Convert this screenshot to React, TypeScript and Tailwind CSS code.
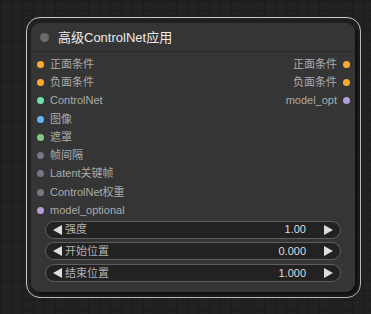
import React from 'react';

const font = { fontFamily: '"Liberation Sans", "Noto Sans CJK SC", sans-serif' };

type Slot = { label: string; color: string };

const inputs: Slot[] = [
  { label: '正面条件', color: 'bg-[#ffa931]' },
  { label: '负面条件', color: 'bg-[#ffa931]' },
  { label: 'ControlNet', color: 'bg-[#6ee0a8]' },
  { label: '图像', color: 'bg-[#64b5f6]' },
  { label: '遮罩', color: 'bg-[#81c784]' },
  { label: '帧间隔', color: 'bg-[#777785]' },
  { label: 'Latent关键帧', color: 'bg-[#777785]' },
  { label: 'ControlNet权重', color: 'bg-[#777785]' },
  { label: 'model_optional', color: 'bg-[#b39ddb]' },
];

const outputs: Slot[] = [
  { label: '正面条件', color: 'bg-[#ffa931]' },
  { label: '负面条件', color: 'bg-[#ffa931]' },
  { label: 'model_opt', color: 'bg-[#b39ddb]' },
];

const widgets = [
  { label: '强度', value: '1.00' },
  { label: '开始位置', value: '0.000' },
  { label: '结束位置', value: '1.000' },
];

function Arrow({ dir }: { dir: 'left' | 'right' }) {
  return (
    <svg width="9" height="10" viewBox="0 0 9 10" className="shrink-0">
      {dir === 'left' ? (
        <polygon points="9,0 9,10 0,5" fill="#dddddd" />
      ) : (
        <polygon points="0,0 0,10 9,5" fill="#dddddd" />
      )}
    </svg>
  );
}

export default function App() {
  return (
    <div
      className="relative w-[371px] h-[314px] overflow-hidden bg-[#222222] bg-[linear-gradient(#1c1c1c_1px,transparent_1px),linear-gradient(90deg,#1c1c1c_1px,transparent_1px)] bg-[size:11px_10px]"
      style={font}
    >
      {/* selected node */}
      <div className="absolute left-[26px] top-[17px] w-[335px] rounded-[14px] border border-[#c4c4c4] pt-[5px] pb-[5px] pl-[4px] pr-[5px]">
        <div className="rounded-[9px] bg-[#353535] shadow-[3px_3px_4px_rgba(0,0,0,0.6)]">
          {/* title */}
          <div className="flex items-center h-[29px] border-b border-[#2b2b2b] pl-[9px]">
            <span className="w-[9px] h-[9px] rounded-full bg-[#6b6b6b]" />
            <span className="ml-[9px] text-[13px] text-[#ececec] leading-none">高级ControlNet应用</span>
          </div>

          {/* slots */}
          <div className="flex justify-between pt-[3px]">
            <div className="flex flex-col">
              {inputs.map((s) => (
                <div key={s.label} className="flex items-center h-[18.3px] pl-[6px]">
                  <span className={`w-[7px] h-[7px] rounded-full ${s.color}`} />
                  <span className="ml-[6px] text-[11px] text-[#ababab] leading-none">{s.label}</span>
                </div>
              ))}
            </div>
            <div className="flex flex-col items-end">
              {outputs.map((s) => (
                <div key={s.label} className="flex items-center h-[18.3px] pr-[5px]">
                  <span className="mr-[6px] text-[11px] text-[#ababab] leading-none">{s.label}</span>
                  <span className={`w-[7px] h-[7px] rounded-full ${s.color}`} />
                </div>
              ))}
            </div>
          </div>

          {/* widgets */}
          <div className="flex flex-col gap-[3.7px] px-[14px] pt-[1px] pb-[10px]">
            {widgets.map((w) => (
              <div
                key={w.label}
                className="flex items-center h-[18px] rounded-full bg-[#222222] border border-[#5e5e5e] pl-[7px] pr-[7px]"
              >
                <Arrow dir="left" />
                <span className="ml-[3px] text-[11px] text-[#b0b0b0] leading-none">{w.label}</span>
                <span className="ml-auto text-[11px] text-[#dddddd] leading-none">{w.value}</span>
                <span className="ml-[18px]">
                  <Arrow dir="right" />
                </span>
              </div>
            ))}
          </div>
        </div>
      </div>
    </div>
  );
}
